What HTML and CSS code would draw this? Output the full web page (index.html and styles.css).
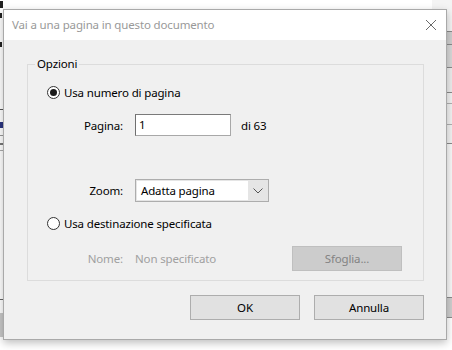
FILE: index.html
```html
<!DOCTYPE html>
<html lang="it">
<head>
    <meta charset="UTF-8">
    <title>Vai a una pagina</title>
    <link rel="stylesheet" href="styles.css">
</head>
<body>
    <div class="backdrop">
        <div class="bg-left">
            <div class="mark m1"></div>
            <div class="mark m2"></div>
            <div class="mark m3"></div>
            <div class="rule r1"></div>
            <div class="mark m4"></div>
            <div class="rule r2"></div>
            <div class="mark m5"></div>
            <div class="rule r3"></div>
            <div class="rule r4"></div>
            <div class="bg-block"></div>
        </div>
        <div class="bg-right">
            <div class="strip s1"></div>
            <div class="strip s2"></div>
            <div class="strip s3"></div>
            <div class="strip s4"></div>
            <div class="strip s5"></div>
            <div class="strip s6"></div>
            <div class="strip s7"></div>
            <div class="strip s8"></div>
            <div class="strip s9"></div>
        </div>
    </div>

    <div class="dialog">
        <div class="titlebar">
            <span class="title">Vai a una pagina in questo documento</span>
            <svg class="close" width="12" height="12" viewBox="0 0 12 12">
                <path d="M1 1 L11 11 M11 1 L1 11" stroke="#6a6a6a" stroke-width="1" fill="none"/>
            </svg>
        </div>

        <div class="dialog-body">
            <div class="group">
                <div class="group-title">Opzioni</div>

                <div class="radio-row first">
                    <span class="radio checked"></span>
                    <span>Usa numero di pagina</span>
                </div>

                <div class="field-row page-row">
                    <span class="field-label">Pagina:</span>
                    <span class="textbox">1</span>
                    <span class="suffix">di 63</span>
                </div>

                <div class="field-row zoom-row">
                    <span class="field-label">Zoom:</span>
                    <span class="combo">
                        <span class="combo-value">Adatta pagina</span>
                        <span class="combo-arrow">
                            <svg width="10" height="6" viewBox="0 0 10 6">
                                <path d="M0.5 0.5 L5 5 L9.5 0.5" stroke="#555" stroke-width="1" fill="none"/>
                            </svg>
                        </span>
                    </span>
                </div>

                <div class="radio-row second">
                    <span class="radio"></span>
                    <span>Usa destinazione specificata</span>
                </div>

                <div class="field-row dest-row">
                    <span class="field-label disabled">Nome:</span>
                    <span class="dest-value disabled">Non specificato</span>
                    <button class="btn btn-disabled" disabled>Sfoglia...</button>
                </div>
            </div>

            <div class="actions">
                <button class="btn">OK</button>
                <button class="btn">Annulla</button>
            </div>
        </div>
    </div>
</body>
</html>
```

FILE: styles.css
```css
* {
    box-sizing: border-box;
}
body {
    margin: 0;
    width: 452px;
    height: 350px;
    overflow: hidden;
    background-color: #fff;
    font-family: 'Noto Sans', 'Open Sans', sans-serif;
    font-size: 11.5px;
    letter-spacing: -0.15px;
    color: #000;
}

/* app behind the dialog, only its edges show */
.backdrop {
    display: flex;
    justify-content: space-between;
    height: 350px;
}
.bg-left {
    width: 40px;
    display: flex;
    flex-direction: column;
}
.mark {
    width: 3px;
    background-color: #222;
}
.m1 { height: 7px; margin-top: 1px; }
.m2 { height: 5px; margin-top: 5px; width: 2px; }
.m3 { height: 5px; margin-top: 24px; width: 2px; }
.m4 { height: 6px; margin-top: 12px; background-color: #2a3580; }
.m5 { height: 2px; margin-top: 7px; background-color: #777; }
.rule {
    height: 1px;
}
.r1 { margin-top: 62px; background-color: #555; }
.r2 { margin-top: 7px; background-color: #999; }
.r3 { margin-top: 5px; background-color: #aaa; }
.r4 { margin-top: 148px; background-color: #666; }
.bg-block {
    margin-top: 13px;
    height: 24px;
    background-color: #c8c8c8;
}
.bg-right {
    width: 20px;
    display: flex;
    flex-direction: column;
}
.strip {
    border-bottom: 1px solid #8a8a8a;
}
.s1 { height: 32px; background-color: #f4f4f4; }
.s2 { height: 13px; background-color: #cfcfcf; }
.s3 { height: 23px; background-color: #d8d8d8; }
.s4 { height: 25px; background-color: #ececec; }
.s5 { height: 11px; background-color: #f2f2f2; border-bottom-color: #b0b0b0; }
.s6 { height: 21px; background-color: #f2f2f2; border-bottom-color: #b0b0b0; }
.s7 { height: 19px; background-color: #f2f2f2; }
.s8 { height: 154px; background-color: #f8f8f8; }
.s9 { height: 20px; background-color: #cfcfcf; }

/* dialog window */
.dialog {
    position: absolute;
    left: 3px;
    top: 9px;
    width: 444px;
    height: 331px;
    border: 1px solid #a9a9a9;
    background-color: #f0f0f0;
    box-shadow: 0 3px 8px rgba(0, 0, 0, 0.25);
    display: flex;
    flex-direction: column;
}
.titlebar {
    height: 30px;
    background-color: #fff;
    display: flex;
    align-items: center;
    justify-content: space-between;
    padding: 0 9px 0 8px;
}
.title {
    color: #999;
    line-height: 16px;
}
.close {
    display: block;
}
.dialog-body {
    padding: 24px 22px 0 23px;
}

/* group box */
.group {
    border: 1px solid #dcdcdc;
    padding: 0 21px 9px 0;
}
.group-title {
    width: fit-content;
    margin: -9px 0 0 7px;
    padding: 0 2px;
    line-height: 16px;
    background-color: #f0f0f0;
}
.radio-row {
    display: flex;
    align-items: center;
    height: 16px;
    padding-left: 19px;
}
.radio-row.first {
    margin-top: 12px;
}
.radio-row.second {
    margin-top: 13px;
}
.radio {
    width: 13px;
    height: 13px;
    margin-right: 4px;
    border: 1px solid #333;
    border-radius: 50%;
    background-color: #fff;
    display: flex;
    align-items: center;
    justify-content: center;
}
.radio.checked::after {
    content: "";
    width: 7px;
    height: 7px;
    border-radius: 50%;
    background-color: #1a1a1a;
}
.field-row {
    display: flex;
    align-items: center;
}
.field-label {
    width: 95px;
    margin-right: 12px;
    text-align: right;
}
.page-row {
    margin-top: 14px;
}
.textbox {
    width: 96px;
    height: 22px;
    padding: 0 3px;
    line-height: 20px;
    background-color: #fff;
    border: 1px solid #a8a8a8;
    border-left-color: #6f6f6f;
    border-top-color: #7a7a7a;
}
.suffix {
    margin-left: 10px;
}
.zoom-row {
    margin-top: 43px;
}
.combo {
    width: 134px;
    height: 23px;
    display: flex;
    border: 1px solid #adadad;
    background-color: #e5e5e5;
}
.combo-value {
    flex: 1;
    margin: 1px 0 1px 1px;
    padding-left: 4px;
    line-height: 19px;
    background-color: #fff;
}
.combo-arrow {
    width: 20px;
    display: flex;
    align-items: center;
    justify-content: center;
}
.combo-arrow svg {
    display: block;
}
.dest-row {
    margin-top: 15px;
}
.disabled {
    color: #a0a0a0;
}
.btn {
    width: 110px;
    height: 25px;
    padding: 0;
    font-family: inherit;
    font-size: 11.5px;
    letter-spacing: -0.15px;
    color: #000;
    background-color: #e1e1e1;
    border: 1px solid #adadad;
}
.dest-row .btn {
    margin-left: auto;
}
.btn-disabled {
    background-color: #cccccc;
    border-color: #bfbfbf;
    color: #838383;
}
.actions {
    display: flex;
    justify-content: flex-end;
    gap: 14px;
    margin-top: 14px;
}
```
